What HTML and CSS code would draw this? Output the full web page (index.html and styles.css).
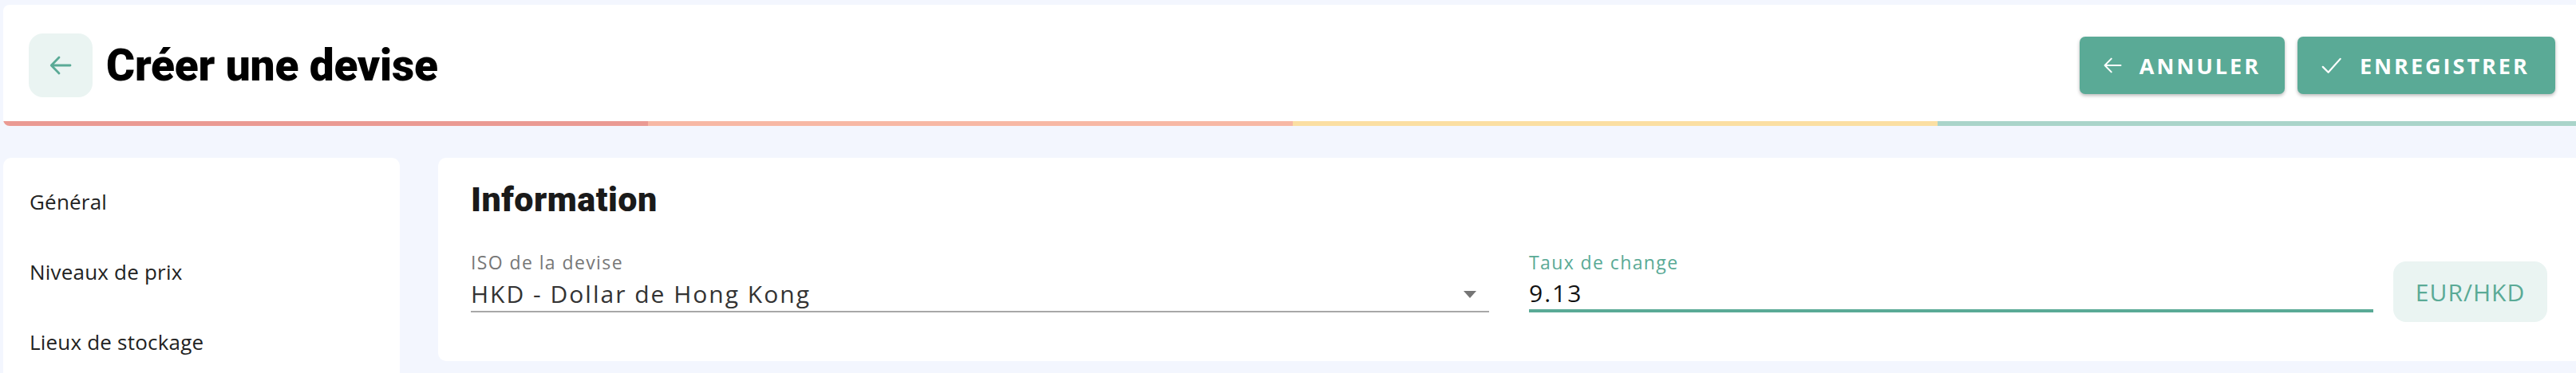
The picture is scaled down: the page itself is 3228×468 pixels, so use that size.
FILE: index.html
```html
<!DOCTYPE html>
<html lang="fr">
<head>
<meta charset="utf-8">
<title>Créer une devise</title>
<link rel="stylesheet" href="styles.css">
</head>
<body>
<div class="page">
  <header class="topbar">
    <div class="topbar-inner">
      <div class="topbar-left">
        <button class="back-btn" type="button" aria-label="Retour">
          <svg viewBox="0 0 24 24" width="32" height="32"><path d="M21 12H3.5M10.5 4.5L3.2 12l7.3 7.5" fill="none" stroke="#5aaa96" stroke-width="2.1" stroke-linecap="round" stroke-linejoin="round"/></svg>
        </button>
        <h1 class="title">Créer une devise</h1>
      </div>
      <div class="actions">
        <button class="btn" type="button">
          <svg viewBox="0 0 24 24" width="30" height="30"><path d="M21 12H3.5M10.5 4.5L3.2 12l7.3 7.5" fill="none" stroke="#fff" stroke-width="1.8" stroke-linecap="round" stroke-linejoin="round"/></svg>
          <span>ANNULER</span>
        </button>
        <button class="btn" type="button">
          <svg viewBox="0 0 24 24" width="30" height="30"><path d="M3 13.5l5.5 5.5L20.5 5.5" fill="none" stroke="#fff" stroke-width="1.8" stroke-linecap="round" stroke-linejoin="round"/></svg>
          <span>ENREGISTRER</span>
        </button>
      </div>
    </div>
    <div class="stripe">
      <span class="seg seg-red"></span>
      <span class="seg seg-salmon"></span>
      <span class="seg seg-yellow"></span>
      <span class="seg seg-green"></span>
    </div>
  </header>

  <div class="body-row">
    <nav class="sidebar">
      <a class="nav-item">Général</a>
      <a class="nav-item">Niveaux de prix</a>
      <a class="nav-item">Lieux de stockage</a>
    </nav>

    <section class="card">
      <h2 class="card-title">Information</h2>
      <div class="fields">
        <div class="field">
          <label class="field-label">ISO de la devise</label>
          <div class="field-value select">
            <span>HKD - Dollar de Hong Kong</span>
            <span class="caret"></span>
          </div>
        </div>
        <div class="rate-row">
          <div class="field focused">
            <label class="field-label">Taux de change</label>
            <div class="field-value">9.13</div>
          </div>
          <div class="pair">EUR/HKD</div>
        </div>
      </div>
    </section>
  </div>
</div>
</body>
</html>
```

FILE: styles.css
```css
html, body {
  margin: 0;
  padding: 0;
  background: #f3f6fe;
  overflow: hidden;
}

.page {
  width: 3232px;
  padding: 6px 0 0 4px;
  box-sizing: content-box;
}

.topbar {
  background: #fff;
  border-radius: 8px;
  overflow: hidden;
}

.topbar-inner {
  display: flex;
  align-items: center;
  justify-content: space-between;
  padding: 36px 34px 30px 32px;
}

.topbar-left {
  display: flex;
  align-items: center;
  gap: 17px;
}

.back-btn {
  width: 80px;
  height: 80px;
  border: none;
  border-radius: 18px;
  background: #eaf4f2;
  display: flex;
  align-items: center;
  justify-content: center;
  padding: 0;
}

.title {
  margin: 0;
  font-family: Roboto, "Liberation Sans", sans-serif;
  font-weight: 900;
  font-size: 55px;
  letter-spacing: -0.2px;
  color: #000;
  line-height: 1;
}

.actions {
  display: flex;
  gap: 16px;
}

.btn {
  height: 72px;
  border: none;
  border-radius: 7px;
  background: #5aaa96;
  color: #fff;
  display: flex;
  align-items: center;
  gap: 20px;
  padding: 0 30px 0 28px;
  font-family: "Open Sans", sans-serif;
  font-weight: 700;
  font-size: 27px;
  letter-spacing: 3px;
  box-shadow: 0 2px 4px rgba(0, 0, 0, 0.28);
}

.btn:first-child {
  width: 257px;
}

.btn:last-child {
  width: 323px;
}

.stripe {
  display: flex;
  height: 6px;
}

.seg {
  flex: 1;
}

.seg-red { background: #ea9a93; }
.seg-salmon { background: #f7b8a5; }
.seg-yellow { background: #fbdfa3; }
.seg-green { background: #aad4ca; }

.body-row {
  display: flex;
  gap: 48px;
  margin-top: 40px;
  align-items: flex-start;
}

.sidebar {
  width: 498px;
  height: 320px;
  background: #fff;
  border-radius: 10px;
  padding-top: 11px;
  box-sizing: border-box;
  display: flex;
  flex-direction: column;
}

.nav-item {
  display: block;
  height: 88px;
  line-height: 88px;
  padding-left: 33px;
  font-family: "Open Sans", sans-serif;
  font-size: 26px;
  letter-spacing: 0.2px;
  color: #222;
}

.card {
  flex: 1;
  height: 255px;
  background: #fff;
  border-radius: 10px;
  padding: 0 44px 0 41px;
  box-sizing: border-box;
}

.card-title {
  margin: 0;
  padding-top: 29px;
  font-family: Roboto, "Liberation Sans", sans-serif;
  font-weight: 900;
  font-size: 43px;
  letter-spacing: 0.5px;
  line-height: 46px;
  color: #1a1a1a;
}

.fields {
  display: grid;
  grid-template-columns: 1276px 1276px;
  gap: 50px;
  margin-top: 42px;
}

.rate-row {
  display: flex;
  gap: 25px;
  align-items: flex-start;
}

.rate-row .field {
  flex: 1;
}

.field-label {
  display: block;
  font-family: "Open Sans", sans-serif;
  font-size: 23px;
  letter-spacing: 1.4px;
  line-height: 28px;
  color: #777;
}

.field-value {
  font-family: "Open Sans", sans-serif;
  font-size: 30px;
  letter-spacing: 2px;
  line-height: 42px;
  color: #333;
  padding-top: 5px;
  border-bottom: 2px solid #a8a8a8;
}

.select {
  display: flex;
  align-items: center;
  justify-content: space-between;
}

.caret {
  width: 0;
  height: 0;
  border-left: 8px solid transparent;
  border-right: 8px solid transparent;
  border-top: 9px solid #757575;
  margin-right: 16px;
}

.focused .field-label {
  color: #5aaa96;
}

.focused .field-value {
  color: #111;
  border-bottom: 4px solid #5aaa96;
  line-height: 40px;
}

.pair {
  width: 193px;
  height: 76px;
  margin-top: 13px;
  border-radius: 16px;
  background: #eaf4f2;
  color: #5aaa96;
  font-family: "Open Sans", sans-serif;
  font-size: 30px;
  letter-spacing: 1px;
  display: flex;
  align-items: center;
  justify-content: center;
}
```
